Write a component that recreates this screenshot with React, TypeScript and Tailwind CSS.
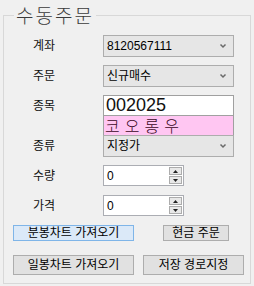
import React from "react";

const font = { fontFamily: '"Liberation Sans", "Noto Sans CJK KR", sans-serif' };
const thin = { fontFamily: '"Noto Sans CJK KR", sans-serif' };

function Chevron() {
  return (
    <svg width="8" height="6" viewBox="0 0 8 6" className="shrink-0">
      <polyline points="1.5,1.5 4,4 6.5,1.5" fill="none" stroke="#6a6a6a" strokeWidth="1.5" />
    </svg>
  );
}

function Combo({ value, className = "" }: { value: string; className?: string }) {
  return (
    <div
      className={
        "w-[131px] h-[22px] border border-[#adadad] bg-[#e6e6e6] flex items-center justify-between pl-[3px] pr-[6px] text-[12px] text-black " +
        className
      }
    >
      <span>{value}</span>
      <Chevron />
    </div>
  );
}

function Spinner({ value }: { value: string }) {
  return (
    <div className="w-[81px] h-[21px] border border-[#abadb3] bg-white flex items-stretch">
      <div className="flex-1 flex items-center pl-[3px] text-[12px]">{value}</div>
      <div className="w-[13px] my-[1px] mr-[1px] flex flex-col gap-[1px]">
        <div className="flex-1 border border-[#acacac] bg-[#e8e8e8] flex items-center justify-center">
          <svg width="5" height="3" viewBox="0 0 5 3">
            <polygon points="0,3 2.5,0 5,3" fill="#222" />
          </svg>
        </div>
        <div className="flex-1 border border-[#acacac] bg-[#e8e8e8] flex items-center justify-center">
          <svg width="5" height="3" viewBox="0 0 5 3">
            <polygon points="0,0 2.5,3 5,0" fill="#222" />
          </svg>
        </div>
      </div>
    </div>
  );
}

function Label({ children }: { children: React.ReactNode }) {
  return <span className="w-[99px] shrink-0 pl-[29px] text-[12px] text-[#111]">{children}</span>;
}

export default function App() {
  return (
    <div className="w-[254px] h-[286px] bg-[#f0f0f0] px-[3px]" style={font}>
      <fieldset className="w-[248px] h-[284px] border border-[#d8d8d8] m-0 p-0">
        <legend
          className="ml-[10px] px-[2px] text-[19px] leading-[30px] tracking-[2px] font-light text-[#3a3a3a]"
          style={thin}
        >
          수동주문
        </legend>

        <div className="flex flex-col pt-[5px]">
          <div className="flex items-center">
            <Label>계좌</Label>
            <Combo value="8120567111" />
          </div>

          <div className="flex items-center mt-[8px]">
            <Label>주문</Label>
            <Combo value="신규매수" />
          </div>

          <div className="flex items-center mt-[8px]">
            <Label>종목</Label>
            <div className="w-[131px] h-[21px] border border-[#a0a0a0] bg-white flex items-center pl-[2px] text-[18px] leading-[19px] text-[#111] overflow-hidden">
              002025
            </div>
          </div>
          <div className="flex items-center">
            <span className="w-[99px] shrink-0" />
            <div
              className="w-[131px] h-[19px] border-x border-[#a0a0a0] bg-[#ffc6f2] flex items-center pl-[1px] text-[16px] leading-[19px] tracking-[5px] font-light text-[#3a0624]"
              style={thin}
            >
              코오롱우
            </div>
          </div>
          <div className="flex items-center">
            <Label>종류</Label>
            <Combo value="지정가" />
          </div>

          <div className="flex items-center mt-[8px]">
            <Label>수량</Label>
            <Spinner value="0" />
          </div>

          <div className="flex items-center mt-[9px]">
            <Label>가격</Label>
            <Spinner value="0" />
          </div>

          <div className="flex items-center mt-[9px] ml-[9px]">
            <button className="w-[121px] h-[16px] border border-[#7fb5e8] bg-[#dbe9f8] text-[12px] leading-[14px] text-black">
              분봉차트 가져오기
            </button>
            <button className="w-[66px] h-[16px] ml-[29px] border border-[#adadad] bg-[#e1e1e1] text-[12px] leading-[14px] text-black">
              현금 주문
            </button>
          </div>

          <div className="flex items-center mt-[14px] ml-[9px]">
            <button className="w-[121px] h-[20px] border border-[#adadad] bg-[#e1e1e1] text-[12px] leading-[18px] text-black">
              일봉차트 가져오기
            </button>
            <button className="w-[101px] h-[20px] ml-[9px] border border-[#adadad] bg-[#e1e1e1] text-[12px] leading-[18px] text-black">
              저장 경로지정
            </button>
          </div>
        </div>
      </fieldset>
    </div>
  );
}
